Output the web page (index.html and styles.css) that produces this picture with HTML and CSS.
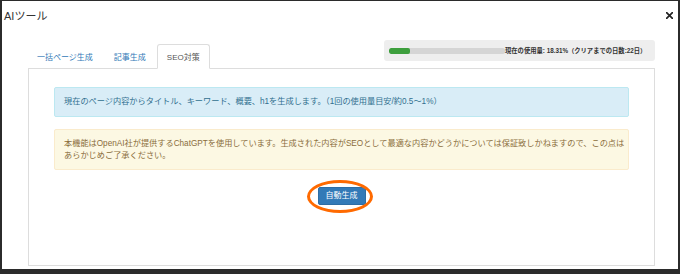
FILE: index.html
```html
<!DOCTYPE html>
<html lang="ja">
<head>
<meta charset="utf-8">
<title>AIツール</title>
<link rel="stylesheet" href="styles.css">
</head>
<body>
<div class="modal">
  <div class="modal-header">
    <h4 class="modal-title">AIツール</h4>
    <button class="close" aria-label="閉じる">
      <svg width="7" height="7" viewBox="0 0 7 7"><path d="M0.6 0.6L6.4 6.4M6.4 0.6L0.6 6.4" stroke="#222" stroke-width="1.7" stroke-linecap="square"/></svg>
    </button>
  </div>
  <div class="modal-body">
    <div class="nav-row">
      <ul class="nav-tabs">
        <li class="tab">一括ページ生成</li>
        <li class="tab">記事生成</li>
        <li class="tab active">SEO対策</li>
      </ul>
      <div class="usage">
        <div class="bar"><div class="bar-fill" style="width:18.31%"></div></div>
        <span class="usage-text">現在の使用量: 18.31%（クリアまでの日数:22日）</span>
      </div>
    </div>
    <div class="tab-content">
      <div class="alert alert-info">現在のページ内容からタイトル、キーワード、概要、h1を生成します。（1回の使用量目安/約0.5〜1%）</div>
      <div class="alert alert-warning"><span class="nowrap">本機能はOpenAI社が提供するChatGPTを使用しています。生成された内容がSEOとして最適な内容かどうかについては保証致しかねますので、この点は</span><br>あらかじめご了承ください。</div>
      <div class="actions">
        <div class="btn-wrap">
          <button class="btn-primary">自動生成</button>
          <span class="highlight"></span>
        </div>
      </div>
    </div>
  </div>
</div>
</body>
</html>
```
FILE: styles.css
```css
* { box-sizing: border-box; }
html, body { margin: 0; padding: 0; }
body {
  background: #2b2b2b;
  font-family: "Liberation Sans", "Noto Sans CJK JP", sans-serif;
  color: #333;
  width: 680px;
  height: 274px;
  padding: 1px 2px 5px 2px;
}
.modal {
  background: #fff;
  height: 268px;
}
.modal-header {
  height: 29px;
  display: flex;
  align-items: center;
  justify-content: space-between;
  padding: 0 5px 0 2px;
}
.modal-title {
  margin: 0;
  font-size: 11px;
  font-weight: normal;
  line-height: 14px;
  color: #333;
}
.close {
  border: 0;
  background: none;
  padding: 0;
  width: 7px;
  height: 7px;
  display: flex;
}
.modal-body {
  padding: 0 23px 0 26px;
}
.nav-row {
  display: flex;
  align-items: flex-end;
  height: 39px;
  border-bottom: 1px solid #ddd;
}
.nav-tabs {
  list-style: none;
  margin: 0 0 -1px 0;
  padding: 0;
  display: flex;
  align-items: flex-end;
}
.tab {
  height: 25px;
  padding: 0 9px;
  margin-right: 1px;
  display: flex;
  align-items: center;
  font-size: 8px;
  color: #337ab7;
  border: 1px solid transparent;
  border-radius: 3px 3px 0 0;
}
.tab:first-child { padding-left: 8px; }
.tab.active {
  color: #555;
  background: #fff;
  border-color: #ddd;
  border-bottom-color: #fff;
}
.usage {
  margin-left: auto;
  align-self: flex-start;
  margin-top: 10px;
  width: 271px;
  height: 21px;
  background: #eeeeee;
  border-radius: 3px;
  display: flex;
  align-items: center;
  padding: 0 0 0 5px;
}
.bar {
  width: 116px;
  height: 6px;
  background: #d5d5d5;
  border-radius: 2px;
  overflow: hidden;
  flex: none;
}
.bar-fill {
  height: 100%;
  background: #3d9f3d;
  border-radius: 2px;
}
.usage-text {
  font-size: 6.3px;
  font-weight: bold;
  color: #333;
  white-space: nowrap;
}
.tab-content {
  border: 1px solid #ddd;
  border-top: 0;
  height: 197px;
  padding: 18px 25px 0 25px;
}
.alert {
  font-size: 8.2px;
  line-height: 12px;
  border: 1px solid;
  border-radius: 2px;
  padding: 8px 9px;
}
.alert-info {
  background: #d9edf7;
  border-color: #bce8f1;
  color: #31708f;
}
.alert-warning {
  margin-top: 12px;
  background: #fcf8e3;
  border-color: #faebcc;
  color: #8a6d3b;
  padding-bottom: 7px;
}
.nowrap { white-space: nowrap; }
.actions {
  margin-top: 17px;
  display: flex;
  justify-content: center;
}
.btn-wrap {
  position: relative;
  display: flex;
}
.btn-primary {
  font-family: inherit;
  font-size: 8px;
  line-height: 10px;
  padding: 3px 7px;
  color: #fff;
  background: #337ab7;
  border: 1px solid #2e6da4;
  border-radius: 2px;
}
.highlight {
  position: absolute;
  left: -11px;
  top: -7px;
  width: 66px;
  height: 33px;
  border: 3px solid #ff6a00;
  border-radius: 50%;
  pointer-events: none;
}
```
